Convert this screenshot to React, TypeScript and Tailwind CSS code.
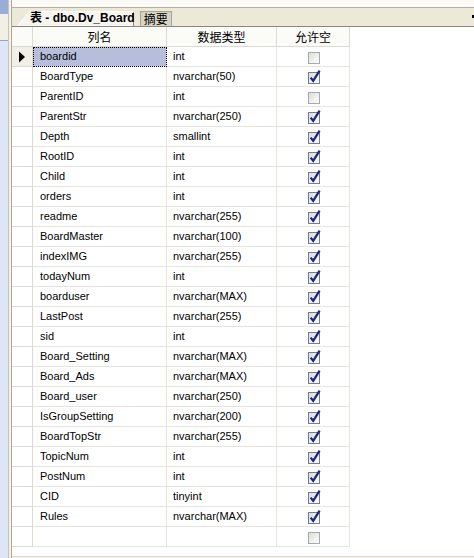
import React from "react";

type Row = { name: string; type: string; nul: boolean };

const rows: Row[] = [
  { name: "boardid", type: "int", nul: false },
  { name: "BoardType", type: "nvarchar(50)", nul: true },
  { name: "ParentID", type: "int", nul: false },
  { name: "ParentStr", type: "nvarchar(250)", nul: true },
  { name: "Depth", type: "smallint", nul: true },
  { name: "RootID", type: "int", nul: true },
  { name: "Child", type: "int", nul: true },
  { name: "orders", type: "int", nul: true },
  { name: "readme", type: "nvarchar(255)", nul: true },
  { name: "BoardMaster", type: "nvarchar(100)", nul: true },
  { name: "indexIMG", type: "nvarchar(255)", nul: true },
  { name: "todayNum", type: "int", nul: true },
  { name: "boarduser", type: "nvarchar(MAX)", nul: true },
  { name: "LastPost", type: "nvarchar(255)", nul: true },
  { name: "sid", type: "int", nul: true },
  { name: "Board_Setting", type: "nvarchar(MAX)", nul: true },
  { name: "Board_Ads", type: "nvarchar(MAX)", nul: true },
  { name: "Board_user", type: "nvarchar(250)", nul: true },
  { name: "IsGroupSetting", type: "nvarchar(200)", nul: true },
  { name: "BoardTopStr", type: "nvarchar(255)", nul: true },
  { name: "TopicNum", type: "int", nul: true },
  { name: "PostNum", type: "int", nul: true },
  { name: "CID", type: "tinyint", nul: true },
  { name: "Rules", type: "nvarchar(MAX)", nul: true },
  { name: "", type: "", nul: false },
];

function Check({ checked }: { checked: boolean }) {
  return (
    <svg width="17" height="16" viewBox="0 0 17 16">
      <defs>
        <linearGradient id="cbg" x1="0" y1="0" x2="1" y2="1">
          <stop offset="0" stopColor="#dcdcd5" />
          <stop offset="1" stopColor="#ffffff" />
        </linearGradient>
      </defs>
      <rect x="2.5" y="3.5" width="11" height="11" fill="url(#cbg)" stroke={checked ? "#6e7d9c" : "#a3a8b3"} strokeWidth="1" />
      {checked && (
        <path d="M4.6 8.6 L7.2 11.8 L13.6 1.6" fill="none" stroke="#1d2580" strokeWidth="2.2" strokeLinejoin="miter" />
      )}
    </svg>
  );
}

export default function App() {
  const font = { fontFamily: '"Liberation Sans", Arial, sans-serif' };
  return (
    <div className="w-[474px] h-[558px] bg-[#fbfaf6] flex overflow-hidden text-[11px] text-black" style={font}>
      {/* left strip */}
      <div className="w-[8px] h-full flex flex-col">
        <div className="h-[14px] bg-[#9aacd8]" />
        <div className="h-[26px] bg-[#f1efe6]" />
        <div className="flex-1 bg-[#dce6f6] border-t border-[#8ea4cf]" />
      </div>
      <div className="w-[1px] h-full bg-[#c9c4b2]" />
      <div className="w-[2px] h-full bg-[#f4f2ea]" />
      {/* main */}
      <div className="flex-1 flex flex-col border-l border-[#aca899]">
        <div className="h-[7px] bg-[#fbfaf6]" />
        <div className="h-[20px] bg-[#ece9d8] border-t border-[#b4b0a0] border-b border-b-[#8a877c] flex items-end relative">
          {/* active tab */}
          <div className="relative ml-[5px] h-[16px] flex items-center pl-[13px] pr-[3px]">
            <svg className="absolute left-0 top-0" width="118" height="16" viewBox="0 0 118 16">
              <path d="M0 16 L12 1 L116 1 L116 16 Z" fill="#f6f5ef" />
              <path d="M0.5 16 L12.5 1.5 L116.5 1.5 L116.5 16" fill="none" stroke="#ffffff" strokeWidth="1" />
              <path d="M116.5 2 L116.5 16" fill="none" stroke="#8a877c" strokeWidth="1" />
            </svg>
            <span className="relative font-bold text-[12px] leading-none whitespace-nowrap" style={{ fontFamily: '"Liberation Sans", "Noto Sans CJK SC", sans-serif' }}>
              表 - dbo.Dv_Board
            </span>
          </div>
          <div className="ml-[2px] h-[15px] px-[3px] bg-[#d9d5c5] border border-[#a7a394] border-b-0 flex items-center text-[12px] leading-none" style={{ fontFamily: '"Noto Sans CJK SC", sans-serif' }}>
            摘要
          </div>
          <div className="absolute right-[-1px] top-[7px] w-[3px] h-[3px] bg-black" />
        </div>
        <div className="flex-1 bg-white flex flex-col">
          <div className="grid grid-cols-[21px_134px_110px_73px] w-[338px]">
            <div className="h-[20px] border-r border-b border-[#dcdad1] bg-[#fbfbf8]" />
            <div className="h-[20px] border-r border-b border-[#dcdad1] bg-[#fbfbf8] flex items-center justify-center text-[12px]" style={{ fontFamily: '"Noto Sans CJK SC", sans-serif' }}>列名</div>
            <div className="h-[20px] border-r border-b border-[#dcdad1] bg-[#fbfbf8] flex items-center justify-center text-[12px]" style={{ fontFamily: '"Noto Sans CJK SC", sans-serif' }}>数据类型</div>
            <div className="h-[20px] border-r border-b border-[#dcdad1] bg-[#fbfbf8] flex items-center justify-center text-[12px]" style={{ fontFamily: '"Noto Sans CJK SC", sans-serif' }}>允许空</div>
            {rows.map((r, i) => (
              <React.Fragment key={i}>
                <div className={`h-[20px] border-r border-b border-[#dcdad1] flex items-center justify-center ${i === 0 ? "bg-[#f1efe8]" : "bg-white"}`}>
                  {i === 0 && (
                    <svg width="8" height="12" viewBox="0 0 8 12">
                      <path d="M1 0.5 L7 6 L1 11.5 Z" fill="#000" />
                    </svg>
                  )}
                </div>
                <div className={`h-[20px] border-r border-b border-[#e6e4dd] flex items-center ${i === 0 ? "bg-[#b6bedb] outline outline-1 outline-dotted outline-black -outline-offset-1 pl-[7px]" : "pl-[7px]"}`}>
                  {r.name}
                </div>
                <div className="h-[20px] border-r border-b border-[#e6e4dd] flex items-center pl-[6px]">{r.type}</div>
                <div className="h-[20px] border-r border-b border-[#e6e4dd] flex items-center justify-center pl-[2px]">
                  <Check checked={r.nul} />
                </div>
              </React.Fragment>
            ))}
          </div>
          <div className="flex-1" />
          <div className="h-[2px] bg-[#f1efe8] border-t border-[#dcdad1]" />
        </div>
      </div>
    </div>
  );
}
